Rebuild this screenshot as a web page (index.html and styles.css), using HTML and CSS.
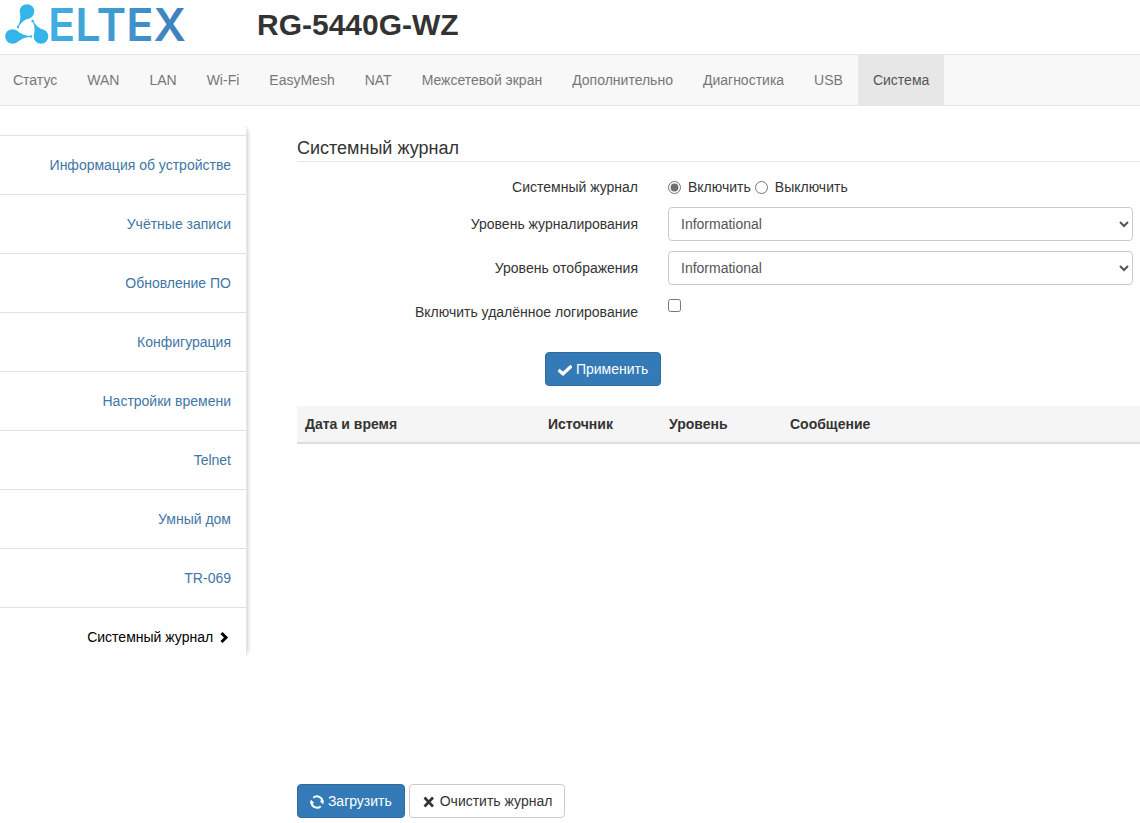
FILE: index.html
```html
<!DOCTYPE html>
<html lang="ru">
<head>
<meta charset="utf-8">
<meta name="viewport" content="width=device-width, initial-scale=1">
<title>RG-5440G-WZ</title>
<link rel="stylesheet" href="styles.css">
</head>
<body>
<header class="header">
  <svg class="logo" viewBox="0 0 200 54" role="img" aria-label="ELTEX">
    <defs>
      <linearGradient id="brand" gradientUnits="userSpaceOnUse" x1="50" y1="0" x2="195" y2="0">
        <stop offset="0" stop-color="#3fb0e2"/>
        <stop offset="1" stop-color="#3f7cb8"/>
      </linearGradient>
    </defs>
    <g fill="#34b5ea">
      <circle cx="27" cy="11.500" r="7.300"/>
      <circle cx="12.500" cy="36.500" r="7.300"/>
      <circle cx="41" cy="36.500" r="7.300"/>
      <path d="M20 13C21 18 20 22 17.800 26.500L18.600 27C21 22.500 24 19.500 30 18.200Z"/>
      <path d="M15 29.700C20 32.500 23 35.800 30 35.900V36.900C23 37 20 40.500 15 43.300Z"/>
      <path d="M34 36C34.500 31 35.500 27 32.700 21.500L33.500 21C36.500 26.500 39 28.500 45 30.500Z"/>
      <circle cx="18" cy="27" r="1.200"/>
      <circle cx="31" cy="36.400" r="1.200"/>
      <circle cx="32.600" cy="21" r="1.200"/>
    </g>
    <text class="logo-text" x="48" y="41" fill="url(#brand)">ELTEX</text>
  </svg>
  <h1 class="model">RG-5440G-WZ</h1>
</header>

<nav class="navbar">
  <a href="#">Статус</a>
  <a href="#">WAN</a>
  <a href="#">LAN</a>
  <a href="#">Wi-Fi</a>
  <a href="#">EasyMesh</a>
  <a href="#">NAT</a>
  <a href="#">Межсетевой экран</a>
  <a href="#">Дополнительно</a>
  <a href="#">Диагностика</a>
  <a href="#">USB</a>
  <a class="active" href="#">Система</a>
</nav>

<div class="layout">
  <aside class="sidebar">
    <a href="#">Информация об устройстве</a>
    <a href="#">Учётные записи</a>
    <a href="#">Обновление ПО</a>
    <a href="#">Конфигурация</a>
    <a href="#">Настройки времени</a>
    <a href="#">Telnet</a>
    <a href="#">Умный дом</a>
    <a href="#">TR-069</a>
    <a class="current" href="#">Системный журнал
      <svg class="icon" viewBox="0 0 14 14"><path d="M4.500 2L9 6.500L4.500 11" fill="none" stroke="currentColor" stroke-width="3"/></svg>
    </a>
  </aside>

  <main class="content">
    <h2 class="title">Системный журнал</h2>
    <form class="form">
      <div class="row" role="radiogroup" aria-labelledby="log-label">
        <span class="label" id="log-label">Системный журнал</span>
        <div class="radios">
          <input type="radio" name="log" id="log-on" checked><label for="log-on">Включить</label>
          <input type="radio" name="log" id="log-off"><label for="log-off">Выключить</label>
        </div>
      </div>
      <div class="row">
        <label class="label" for="log-level">Уровень журналирования</label>
        <select class="select" id="log-level"><option>Informational</option></select>
      </div>
      <div class="row">
        <label class="label" for="view-level">Уровень отображения</label>
        <select class="select" id="view-level"><option>Informational</option></select>
      </div>
      <div class="row">
        <label class="label" for="remote">Включить удалённое логирование</label>
        <input class="check" type="checkbox" id="remote">
      </div>
      <div class="submit">
        <button class="btn primary" type="button">
          <svg class="icon" viewBox="0 0 14 14"><path d="M0.500 7L5 10.800L13.500 3" fill="none" stroke="currentColor" stroke-width="3.200"/></svg>
          Применить
        </button>
      </div>
    </form>

    <div class="log">
      <table class="table">
        <colgroup><col class="col-date"><col class="col-short"><col class="col-short"><col></colgroup>
        <thead>
          <tr><th>Дата и время</th><th>Источник</th><th>Уровень</th><th>Сообщение</th></tr>
        </thead>
      </table>
    </div>

    <div class="actions">
      <button class="btn primary" type="button">
        <svg class="icon" viewBox="0 0 14 14"><path d="M3.300 2.800A5.400 5.400 0 0 1 12.400 7M10.700 11.200A5.400 5.400 0 0 1 1.600 7" fill="none" stroke="currentColor" stroke-width="2"/><path d="M0 8.500L0.800 4.500L4.300 8ZM14 5.500L13.200 9.500L9.700 6Z" fill="currentColor"/></svg>
        Загрузить
      </button>
      <button class="btn" type="button">
        <svg class="icon" viewBox="0 0 14 14"><path d="M2.500 2.500L11 11.500M11 2.500L2.500 11.500" fill="none" stroke="currentColor" stroke-width="2.600"/></svg>
        Очистить журнал
      </button>
    </div>
  </main>
</div>
</body>
</html>
```
FILE: styles.css
```css
* { box-sizing: border-box; }

body {
  margin: 0;
  background: #fff;
  color: #333;
  font: 14px/20px "Liberation Sans", Arial, sans-serif;
}

a { text-decoration: none; }

.header {
  display: flex;
  align-items: flex-start;
  gap: 57px;
  height: 54px;
}
.logo { width: 200px; height: 54px; overflow: visible; }
.logo-text { font: 600 45px Inter, sans-serif; }
.model {
  margin: 8px 0 0;
  font-size: 30px;
  line-height: 33px;
}

.navbar {
  display: flex;
  overflow: hidden;
  background: #f8f8f8;
  border: solid #e7e7e7;
  border-width: 1px 0;
}
.navbar a {
  padding: 15px;
  color: #777;
  white-space: nowrap;
}
.navbar a:first-child { padding-left: 13px; }
.navbar .active { background: #e7e7e7; color: #555; }

.layout {
  display: grid;
  grid-template-columns: 247px minmax(0, 1fr);
  column-gap: 50px;
  align-items: start;
}

.sidebar {
  display: flex;
  flex-direction: column;
  margin-top: 20px;
  padding-top: 9px;
  border-right: 1px solid #e7e7e7;
  box-shadow: 5px 0 4px -4px #ccc;
}
.sidebar a {
  padding: 19px 15px;
  border-top: 1px solid #e1e1e1;
  color: #4176a6;
  text-align: right;
}
.sidebar .current { padding-bottom: 9px; color: #000; }

.icon {
  width: 14px;
  height: 14px;
  vertical-align: -3px;
}

.content { padding-top: 32px; }
.title {
  margin: 0;
  padding-bottom: 3px;
  border-bottom: 1px solid #e5e5e5;
  font-size: 18px;
  font-weight: 400;
  line-height: 20px;
}

.form {
  display: flex;
  flex-direction: column;
  gap: 10px;
  padding: 15px 7px 20px 0;
}
.row {
  display: grid;
  grid-template-columns: 341px minmax(0, 1fr);
  column-gap: 30px;
}
.label { padding-top: 7px; text-align: right; }
.row:first-child .label { padding-top: 0; }
.radios { display: flex; align-items: center; }
.radios input { width: 13px; height: 13px; margin: 0 7px 0 0; accent-color: #707070; }
.radios label { margin-right: 4px; }

.select {
  width: 100%;
  height: 34px;
  padding: 6px 8px;
  border: 1px solid #ccc;
  border-radius: 4px;
  background: #fff;
  color: #555;
  font: inherit;
}
.check { width: 13px; height: 13px; margin: 4px 0 0; }

.submit { padding: 20px 0 0 248px; }
.btn {
  height: 34px;
  padding: 6px 12px;
  border: 1px solid #ccc;
  border-radius: 4px;
  background: #fff;
  color: #333;
  font: inherit;
  white-space: nowrap;
}
.primary { background: #337ab7; border-color: #2e6da4; color: #fff; }

.log { min-height: 378px; }
.table {
  width: 100%;
  table-layout: fixed;
  border-collapse: collapse;
}
.col-date { width: 243px; }
.col-short { width: 121px; }
.table th {
  padding: 8px;
  background: #f5f5f5;
  border-bottom: 2px solid #ddd;
  text-align: left;
}

.actions { display: flex; gap: 4px; padding-bottom: 5px; }
```
